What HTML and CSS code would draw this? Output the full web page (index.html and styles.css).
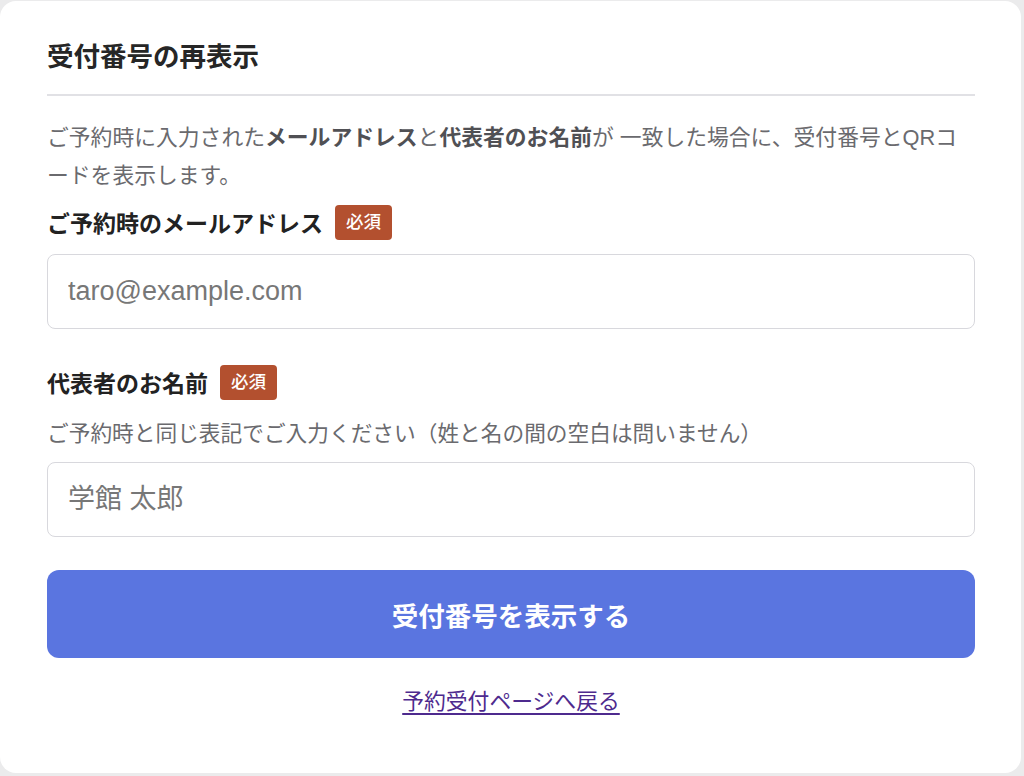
FILE: index.html
```html
<!DOCTYPE html>
<html lang="ja">
<head>
    <meta charset="UTF-8">
    <meta name="viewport" content="width=device-width, initial-scale=1.0">
    <title>受付番号の再表示</title>
    <link rel="stylesheet" href="styles.css">
</head>
<body>
    <main class="card">
        <h1 class="card-title">受付番号の再表示</h1>
        <p class="lead">ご予約時に入力された<strong>メールアドレス</strong>と<strong>代表者のお名前</strong>が 一致した場合に、受付番号とQRコードを表示します。</p>

        <form class="lookup-form">
            <label class="field-label" for="email">ご予約時のメールアドレス <span class="required">必須</span></label>
            <input class="text-input" type="email" id="email" name="email" placeholder="taro@example.com">

            <label class="field-label field-label-second" for="name">代表者のお名前 <span class="required">必須</span></label>
            <p class="hint">ご予約時と同じ表記でご入力ください（姓と名の間の空白は問いません）</p>
            <input class="text-input text-input-name" type="text" id="name" name="name" placeholder="学館 太郎">

            <button class="submit-btn" type="submit">受付番号を表示する</button>
        </form>

        <p class="back"><a class="back-link" href="#">予約受付ページへ戻る</a></p>
    </main>
</body>
</html>
```

FILE: styles.css
```css
body {
    margin: 0;
    background-color: #ebebec;
    font-family: "Liberation Sans", "Noto Sans CJK JP", sans-serif;
    color: #222;
}
.card {
    box-sizing: border-box;
    height: 772px;
    margin: 1px 3px 0 0;
    padding: 38px 46px 0 47px;
    background-color: #fff;
    border-radius: 16px;
}
.card-title {
    margin: 0;
    padding-bottom: 19px;
    border-bottom: 2px solid #e1e1e5;
    font-size: 26.5px;
    line-height: 36px;
    font-weight: bold;
    color: #262626;
}
.lead {
    margin: 23px 0 0;
    font-size: 21.8px;
    line-height: 38px;
    color: #6a6a6e;
}
.lead strong {
    color: #505054;
}
.lookup-form {
    margin: 0;
}
.field-label {
    display: flex;
    align-items: center;
    gap: 12px;
    height: 36px;
    margin-top: 9px;
    font-size: 23px;
    font-weight: bold;
    color: #222;
}
.field-label-second {
    margin-top: 35px;
}
.required {
    display: inline-block;
    height: 35px;
    padding: 0 11px;
    border-radius: 4px;
    background-color: #b3502f;
    color: #fff;
    font-size: 17.5px;
    font-weight: 500;
    line-height: 35px;
}
.text-input {
    display: block;
    box-sizing: border-box;
    width: 100%;
    height: 75px;
    margin-top: 14px;
    padding: 0 20px;
    border: 1.5px solid #d8d8dd;
    border-radius: 8px;
    font-family: inherit;
    font-size: 27px;
    color: #222;
    background-color: #fff;
}
.text-input::placeholder {
    color: #777;
}
.text-input-name {
    margin-top: 13px;
}
.hint {
    margin: 19px 0 0;
    font-size: 21.7px;
    line-height: 30px;
    color: #6a6a6e;
}
.submit-btn {
    display: block;
    width: 100%;
    height: 88px;
    margin-top: 33px;
    border: none;
    border-radius: 12px;
    background-color: #5a75e0;
    color: #fff;
    font-family: inherit;
    font-size: 26.5px;
    font-weight: bold;
    cursor: pointer;
}
.back {
    margin: 29px 0 0;
    text-align: center;
    font-size: 21.8px;
    line-height: 30px;
}
.back-link {
    color: #4e2a8e;
    text-underline-offset: 4px;
}
```
